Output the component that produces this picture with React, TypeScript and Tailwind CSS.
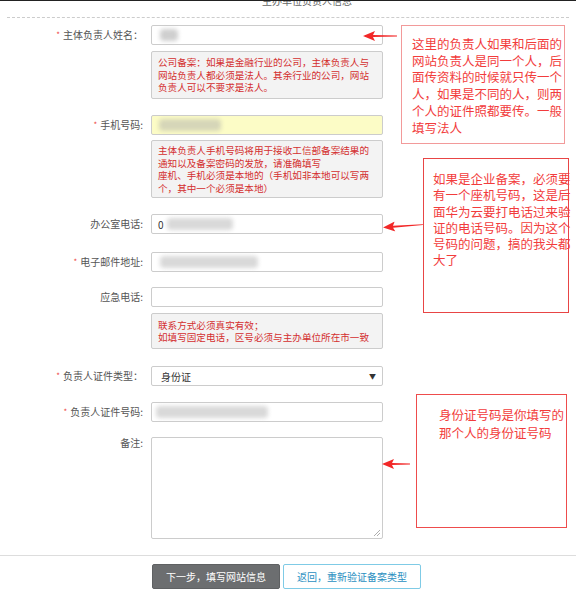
import React from "react";

const font = { fontFamily: '"Noto Sans CJK SC", "Noto Sans", sans-serif' };

function Arrow({ w }: { w: number }) {
  return (
    <svg width={w} height="10" viewBox={`0 0 ${w} 10`}>
      <polygon
        points={`0,5 12,0 10,4 ${w},4.6 ${w},5.4 10,6 12,10`}
        fill="#f22828"
      />
    </svg>
  );
}

function Label({ text, req }: { text: string; req?: boolean }) {
  return (
    <div className="w-[143px] shrink-0 text-right text-[10px] text-[#555] leading-[12px]">
      {req && <span className="text-[#e44] text-[8px] mr-[3px] align-top">*</span>}
      {text}
    </div>
  );
}

function Blur({ w, ml = 0, c = "#d9d9d9" }: { w: number; ml?: number; c?: string }) {
  return (
    <div
      className="h-[12px] blur-[2px] rounded-sm"
      style={{ width: w, marginLeft: ml, background: c }}
    />
  );
}

function Field({
  children,
  bg = "bg-white",
}: {
  children?: React.ReactNode;
  bg?: string;
}) {
  return (
    <div
      className={`ml-[8px] w-[232px] h-[20px] border border-[#ccc] rounded-[2px] flex items-center px-[6px] ${bg}`}
    >
      {children}
    </div>
  );
}

function Tip({ lines, h }: { lines: string[]; h: number }) {
  return (
    <div
      className="ml-[151px] w-[232px] bg-[#f3f3f3] border border-[#ccc] rounded-[2px] px-[6px] flex flex-col justify-center text-[9.6px] leading-[12.5px] text-[#d42f2f]"
      style={{ height: h }}
    >
      {lines.map((l, i) => (
        <div key={i} className="whitespace-nowrap">
          {l}
        </div>
      ))}
    </div>
  );
}

function Note({ lines }: { lines: string[] }) {
  return (
    <>
      {lines.map((l, i) => (
        <div key={i} className="whitespace-nowrap">
          {l}
        </div>
      ))}
    </>
  );
}

export default function App() {
  return (
    <div
      className="relative w-[576px] h-[595px] overflow-hidden bg-white border-t border-[#222]"
      style={font}
    >
      <div className="-mt-[6px] pl-[262px] text-[10px] leading-[12px] text-[#666]">
        主办单位负责人信息
      </div>
      <div className="mt-[10px] ml-[7px] mr-[7px] border-t border-dashed border-[#ccc]" />

      <div className="flex flex-col">
        <div className="mt-[7px] flex items-center">
          <Label text="主体负责人姓名：" req />
          <Field>
            <Blur w={18} ml={2} c="#cfcfcf" />
          </Field>
        </div>
        <div className="mt-[6px]">
          <Tip
            h={48}
            lines={[
              "公司备案：如果是金融行业的公司，主体负责人与",
              "网站负责人都必须是法人。其余行业的公司，网站",
              "负责人可以不要求是法人。",
            ]}
          />
        </div>
        <div className="mt-[16px] flex items-center">
          <Label text="手机号码:" req />
          <Field bg="bg-[#fcfcc6]">
            <Blur w={62} ml={1} c="#d6d6b8" />
          </Field>
        </div>
        <div className="mt-[5px]">
          <Tip
            h={58}
            lines={[
              "主体负责人手机号码将用于接收工信部备案结果的",
              "通知以及备案密码的发放，请准确填写",
              "座机、手机必须是本地的（手机如非本地可以写两",
              "个，其中一个必须是本地）",
            ]}
          />
        </div>
        <div className="mt-[16px] flex items-center">
          <Label text="办公室电话:" />
          <Field>
            <span className="text-[10px] text-[#333]">0</span>
            <Blur w={66} ml={3} />
          </Field>
        </div>
        <div className="mt-[18px] flex items-center">
          <Label text="电子邮件地址:" req />
          <Field>
            <Blur w={98} ml={2} />
          </Field>
        </div>
        <div className="mt-[15px] flex items-center">
          <Label text="应急电话:" />
          <Field />
        </div>
        <div className="mt-[6px]">
          <Tip
            h={36}
            lines={["联系方式必须真实有效；", "如填写固定电话，区号必须与主办单位所在市一致"]}
          />
        </div>
        <div className="mt-[17px] flex items-center">
          <Label text="负责人证件类型：" req />
          <Field>
            <span className="text-[10px] text-[#333] ml-[3px]">身份证</span>
            <span className="ml-auto text-[7px] text-[#333]">▼</span>
          </Field>
        </div>
        <div className="mt-[16px] flex items-center">
          <Label text="负责人证件号码:" req />
          <Field>
            <Blur w={112} ml={-2} />
          </Field>
        </div>
        <div className="mt-[15px] flex items-start">
          <Label text="备注:" />
          <div className="relative ml-[8px] w-[232px] h-[102px] border border-[#ccc] rounded-[2px] bg-white">
            <svg
              className="absolute right-[2px] bottom-[2px]"
              width="6"
              height="6"
              viewBox="0 0 6 6"
            >
              <line x1="0" y1="6" x2="6" y2="0" stroke="#999" strokeWidth="0.8" />
              <line x1="3" y1="6" x2="6" y2="3" stroke="#999" strokeWidth="0.8" />
            </svg>
          </div>
        </div>
        <div className="mt-[16px] border-t border-[#ddd]" />
        <div className="mt-[8px] flex items-center">
          <button className="ml-[152px] w-[128px] h-[25px] bg-[#6c6e70] text-white text-[10px] rounded-[2px] border border-[#5f6163]">
            下一步，填写网站信息
          </button>
          <button className="ml-[3px] w-[138px] h-[25px] bg-white text-[#2b8fc1] text-[10px] rounded-[2px] border border-[#7fcbe6]">
            返回，重新验证备案类型
          </button>
        </div>
      </div>

      {/* arrows */}
      <div className="absolute left-[363px] top-[30px]">
        <Arrow w={34} />
      </div>
      <div className="absolute left-[383px] top-[220px] -rotate-[4deg]">
        <Arrow w={40} />
      </div>
      <div className="absolute left-[382px] top-[458px]">
        <Arrow w={28} />
      </div>

      {/* annotations */}
      <div className="absolute left-[401px] top-[24px] w-[164px] h-[119px] border border-[#f29a9a] pl-[10px] pt-[10px] text-[12.5px] leading-[16.7px] text-[#f23c3c]">
        <Note
          lines={[
            "这里的负责人如果和后面的",
            "网站负责人是同一个人，后",
            "面传资料的时候就只传一个",
            "人，如果是不同的人，则两",
            "个人的证件照都要传。一般",
            "填写法人",
          ]}
        />
      </div>
      <div className="absolute left-[423px] top-[157px] w-[146px] h-[155px] border border-[#e84545] pl-[9px] pt-[12px] text-[12.5px] leading-[16.3px] text-[#f23c3c]">
        <Note
          lines={[
            "如果是企业备案，必须要",
            "有一个座机号码，这是后",
            "面华为云要打电话过来验",
            "证的电话号码。因为这个",
            "号码的问题，搞的我头都",
            "大了",
          ]}
        />
      </div>
      <div className="absolute left-[416px] top-[393px] w-[151px] h-[134px] border border-[#ee4c4c] pl-[22px] pt-[11px] text-[12.5px] leading-[18px] text-[#f23c3c]">
        <Note lines={["身份证号码是你填写的", "那个人的身份证号码"]} />
      </div>
    </div>
  );
}
